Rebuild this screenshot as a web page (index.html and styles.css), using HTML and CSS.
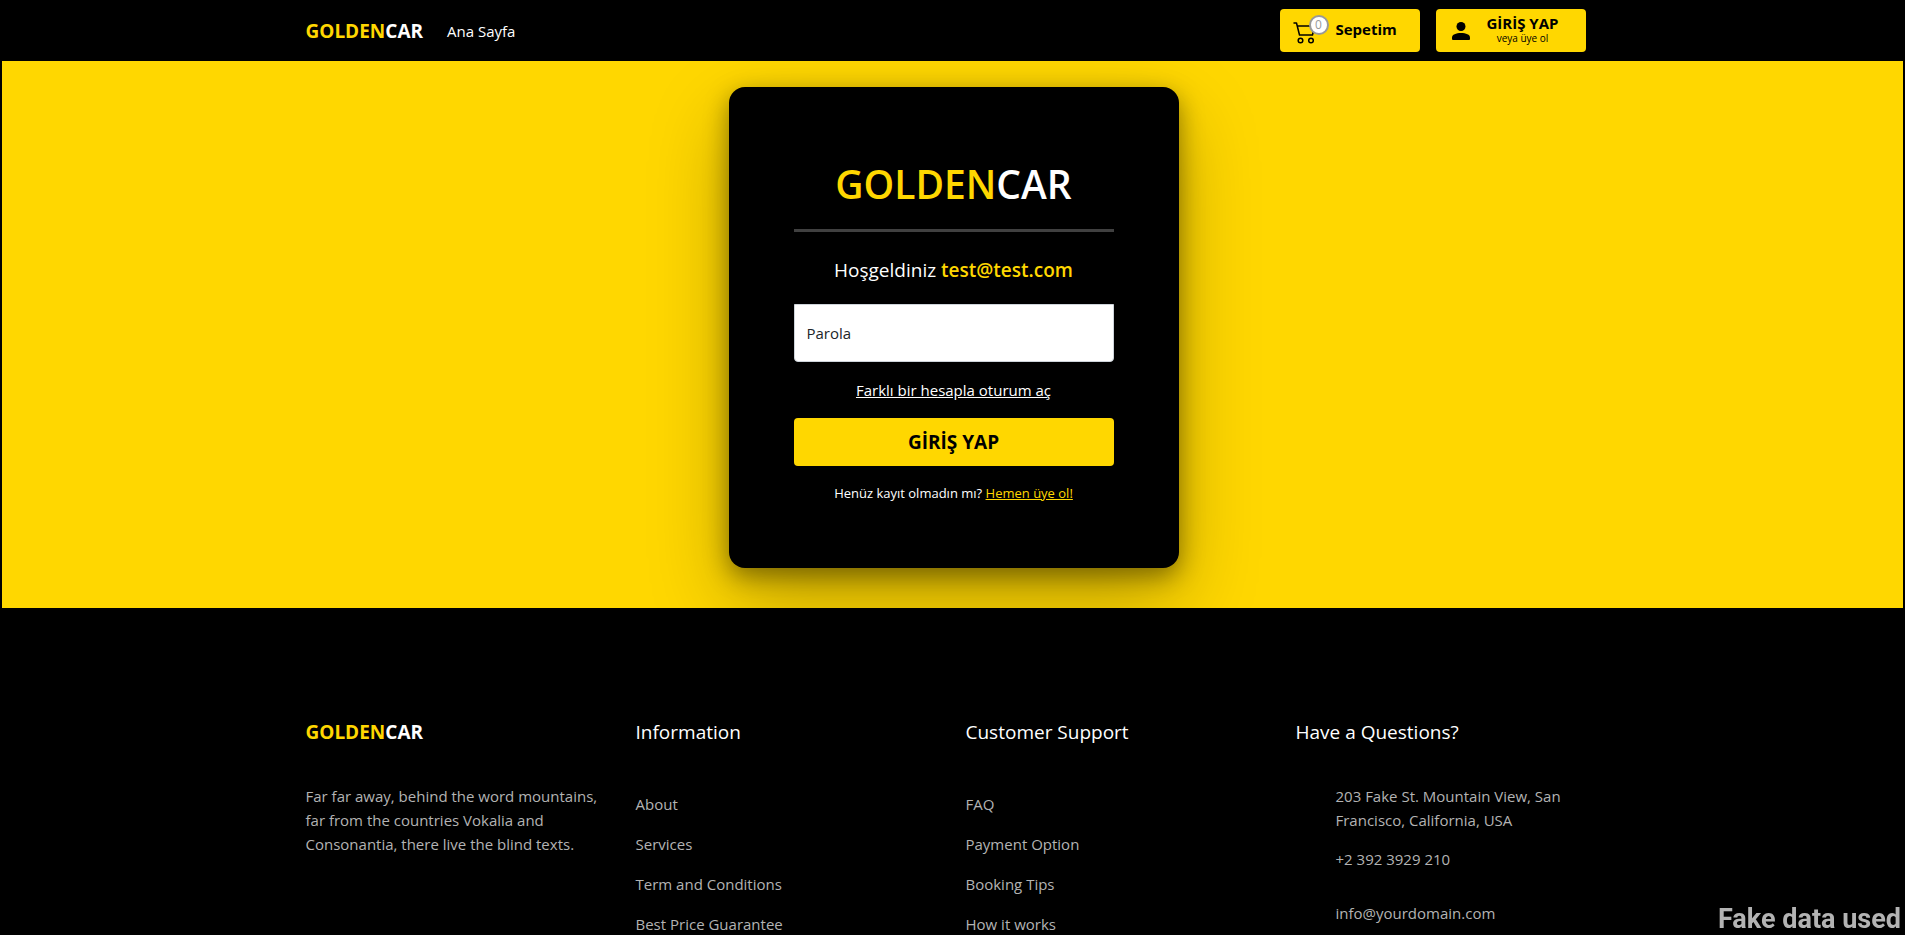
FILE: index.html
```html
<!DOCTYPE html>
<html lang="tr">
<head>
<meta charset="utf-8">
<meta name="viewport" content="width=device-width, initial-scale=1">
<title>GOLDENCAR</title>
<link rel="stylesheet" href="styles.css">
</head>
<body>
<header class="header">
  <div class="container header-row">
    <nav class="nav">
      <a class="brand" href="#"><span class="gold">GOLDEN</span>CAR</a>
      <a class="nav-link" href="#">Ana Sayfa</a>
    </nav>
    <div class="actions">
      <button class="action cart" type="button">
        <span class="cart-icon">
          <svg width="22" height="22" viewBox="0 0 22 22" fill="none" stroke="#000" stroke-width="1.5" stroke-linecap="round" stroke-linejoin="round" aria-hidden="true">
            <path d="M1 1h2.500l3 12H19.500l2-9H4.300"/>
            <circle cx="7.500" cy="18.500" r="2.300"/>
            <circle cx="18" cy="18.500" r="2.300"/>
          </svg>
          <span class="badge">0</span>
        </span>
        <span class="action-title">Sepetim</span>
      </button>
      <button class="action login" type="button">
        <svg width="18" height="18" viewBox="0 0 18 18" aria-hidden="true">
          <circle cx="9" cy="4.500" r="4.500"/>
          <path d="M0 17v-1.500C0 12.500 4 11 9 11s9 1.500 9 4.500V17q0 1-1 1H1q-1 0-1-1z"/>
        </svg>
        <span class="login-text">
          <span class="action-title">GİRİŞ YAP</span>
          <span class="action-note">veya üye ol</span>
        </span>
      </button>
    </div>
  </div>
</header>

<main class="main">
  <form class="card">
    <h1 class="card-title"><span class="gold">GOLDEN</span>CAR</h1>
    <hr class="divider">
    <p class="welcome">Hoşgeldiniz <b class="gold">test@test.com</b></p>
    <input class="password" type="password" placeholder="Parola" aria-label="Parola">
    <a class="switch" href="#">Farklı bir hesapla oturum aç</a>
    <button class="submit" type="button">GİRİŞ YAP</button>
    <p class="signup">Henüz kayıt olmadın mı? <a class="gold" href="#">Hemen üye ol!</a></p>
  </form>
</main>

<footer class="footer">
  <div class="container footer-grid">
    <section>
      <h2 class="footer-title"><a class="brand" href="#"><span class="gold">GOLDEN</span>CAR</a></h2>
      <p class="about">Far far away, behind the word mountains, far from the countries Vokalia and Consonantia, there live the blind texts.</p>
    </section>
    <section>
      <h2 class="footer-title">Information</h2>
      <ul class="links">
        <li><a href="#">About</a></li>
        <li><a href="#">Services</a></li>
        <li><a href="#">Term and Conditions</a></li>
        <li><a href="#">Best Price Guarantee</a></li>
      </ul>
    </section>
    <section>
      <h2 class="footer-title">Customer Support</h2>
      <ul class="links">
        <li><a href="#">FAQ</a></li>
        <li><a href="#">Payment Option</a></li>
        <li><a href="#">Booking Tips</a></li>
        <li><a href="#">How it works</a></li>
      </ul>
    </section>
    <section>
      <h2 class="footer-title">Have a Questions?</h2>
      <ul class="contact">
        <li>203 Fake St. Mountain View, San Francisco, California, USA</li>
        <li><a href="#">+2 392 3929 210</a></li>
        <li class="mail"><a href="#">info@yourdomain.com</a></li>
      </ul>
    </section>
  </div>
</footer>
<div class="notice">Fake data used</div>
</body>
</html>
```
FILE: styles.css
```css
* { box-sizing: border-box; }

body {
  margin: 0;
  min-height: 100vh;
  background: #000;
  color: #fff;
  font: 15px/24px "Segoe UI", "Open Sans", "Noto Sans", sans-serif;
}

h1, h2, p, ul { margin: 0; padding: 0; }
ul { list-style: none; }
a { color: inherit; text-decoration: none; }
button, input { font: inherit; }
button { cursor: pointer; }
.gold { color: #ffd700; }

.container {
  width: 100%;
  max-width: 1320px;
  margin: 0 auto;
  padding: 0 11px 0 13px;
}

.header { padding: 9px 0; }
.header-row {
  display: flex;
  align-items: center;
  justify-content: space-between;
  padding-right: 27px;
}
.nav { display: flex; align-items: center; gap: 24px; }
.brand { font-size: 19px; font-weight: 700; }
.actions { display: flex; gap: 16px; }
.action {
  display: flex;
  align-items: center;
  height: 43px;
  padding: 0 14px;
  border: 0;
  border-radius: 4px;
  background: #ffd700;
  color: #000;
}
.cart { width: 140px; padding: 0 13px; gap: 21px; }
.cart-icon { position: relative; display: flex; padding-top: 4px; }
.badge {
  position: absolute;
  top: -3px;
  left: 16px;
  width: 20px;
  height: 20px;
  border: 2px solid #999;
  border-radius: 50%;
  background: #fff;
  color: #999;
  font-size: 12px;
  line-height: 16px;
  text-align: center;
}
.cart .action-title { padding-bottom: 3px; }
.login { width: 150px; padding: 0 16px; }
.login-text { display: flex; flex: 1; flex-direction: column; align-items: center; padding: 0 0 4px 6px; }
.action-title { font-weight: 700; line-height: 18px; white-space: nowrap; }
.action-note { font-size: 10px; line-height: 12px; }

.main {
  display: flex;
  justify-content: center;
  margin: 0 2px;
  padding: 26px 16px 40px 18px;
  background: #ffd700;
  overflow: hidden;
}
.card {
  display: flex;
  flex-direction: column;
  width: 450px;
  padding: 72px 65px 63px;
  border-radius: 16px;
  background: #000;
  text-align: center;
  box-shadow: 0 32px 80px rgba(0, 0, 0, 0.27), 0 8px 24px rgba(0, 0, 0, 0.4);
}
.card-title { font-size: 39px; font-weight: 600; line-height: 50px; }
.divider {
  width: 100%;
  height: 3px;
  margin: 20px 0 24px;
  border: 0;
  background: #404040;
}
.welcome { margin-bottom: 20px; font-size: 19px; line-height: 28px; }
.welcome b { font-weight: 600; }
.password {
  width: 100%;
  height: 58px;
  padding: 0 12px;
  border: 1px solid #ced4da;
  border-radius: 0 0 4px 4px;
  background: #fff;
  color: #212529;
}
.password::placeholder { color: #212529; opacity: 1; }
.switch { align-self: center; margin: 16px 0; text-decoration: underline; }
.submit {
  height: 48px;
  border: 0;
  border-radius: 4px;
  background: #ffd700;
  color: #000;
  font-size: 19px;
  font-weight: 700;
}
.signup { margin-top: 15px; font-size: 13px; }
.signup a { text-decoration: underline; }

.footer { padding: 112px 0 0; }
.footer-grid {
  display: grid;
  grid-template-columns: repeat(4, 1fr);
  column-gap: 24px;
  color: #b3b3b3;
}
.footer-title {
  margin-bottom: 40px;
  color: #fff;
  font-size: 19px;
  font-weight: 400;
  line-height: 24px;
}
.links a { display: block; padding: 8px 0; }
.contact { padding-left: 40px; }
.contact li { margin-bottom: 15px; }
.contact .mail { padding-top: 15px; margin-bottom: 0; }

.notice {
  position: fixed;
  right: 4px;
  bottom: 0;
  color: #b3b3b3;
  font: 700 27px/32px Roboto, sans-serif;
}
```
